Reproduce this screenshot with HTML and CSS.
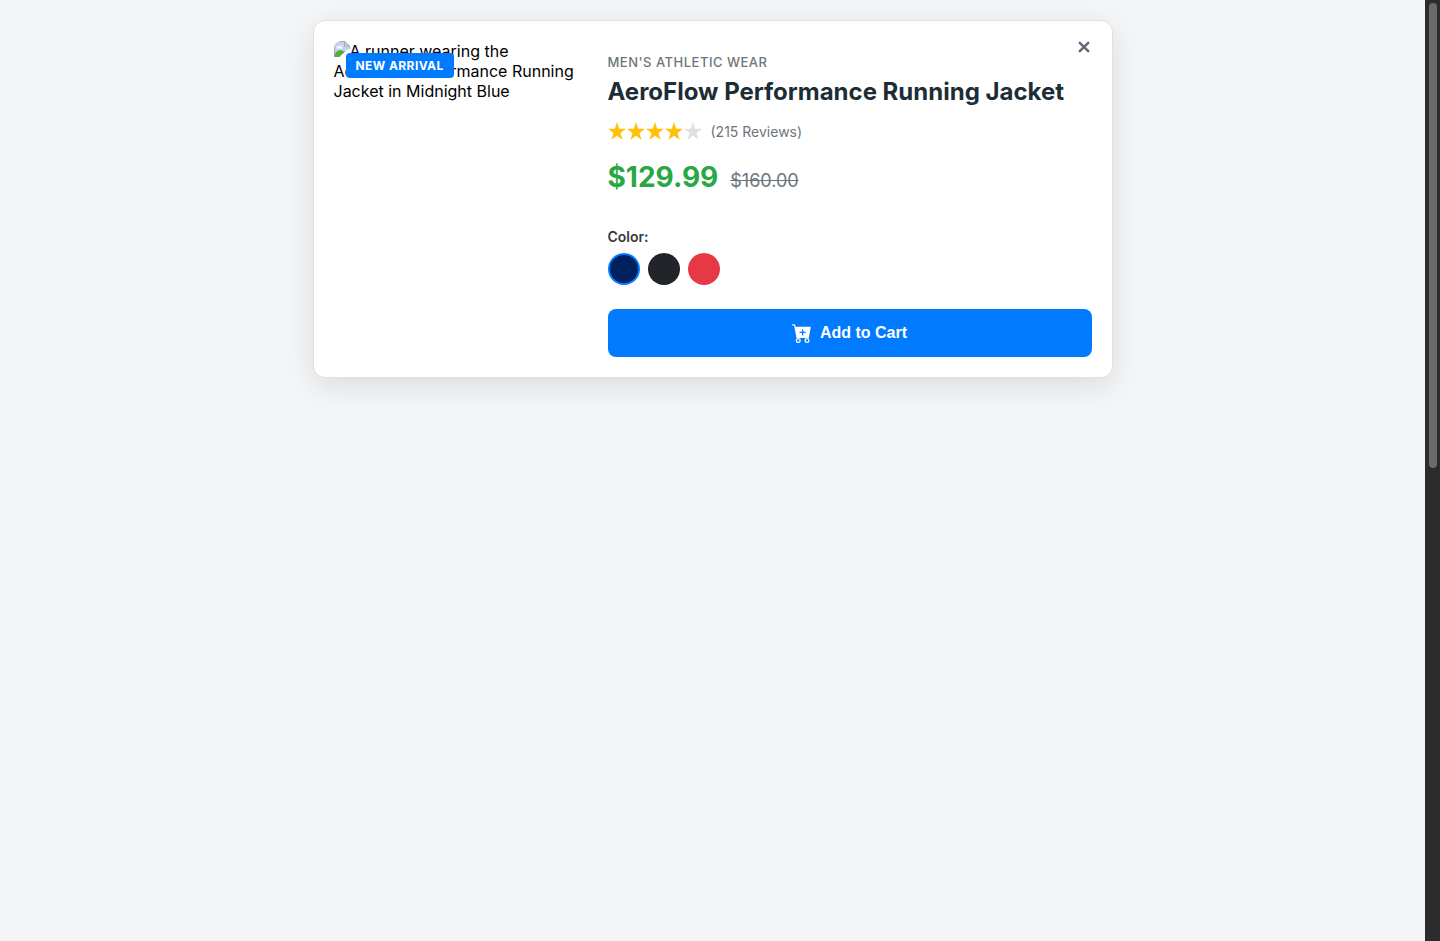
FILE: index.html
```html
<!DOCTYPE html>
<html lang="en">
<head>
<meta charset="utf-8">
<title>AeroFlow Performance Running Jacket</title>
<link rel="stylesheet" href="styles.css">
</head>
<body>
<main class="page">
  <article class="card">
    <div class="media">
      <p class="alt"><svg class="broken" width="16" height="16" viewBox="0 0 16 16"><path d="M0 16V6a6 6 0 0 1 6-6h5l5 5v3l-9 8z" fill="#c3d3f3"/><path d="M0 16v-2c3-5 6-6 11-3l-5 5z" fill="#55ad36"/><path d="M2.500 7.500c0-2 2-3 3-2 1-1 3 0 3 2z" fill="#fff"/><path d="M.5 16V6A5.500 5.500 0 0 1 6 .5h4.500L15.500 5v3M10.500.5V5h5" fill="none" stroke="#aaa"/><path d="M6 16l9.500-8" stroke="#fff" stroke-width="1.500"/></svg>A runner wearing the AeroFlow Performance Running Jacket in Midnight Blue</p>
      <span class="badge">New Arrival</span>
    </div>
    <div class="info">
      <button class="close" aria-label="Close"><svg width="12" height="12" viewBox="0 0 12 12"><path d="M1.800 1.800l8.400 8.400M10.200 1.800l-8.400 8.400" fill="none" stroke="currentColor" stroke-width="2.500" stroke-linecap="round"/></svg></button>
      <p class="category">Men's Athletic Wear</p>
      <h1 class="title">AeroFlow Performance Running Jacket</h1>
      <div class="rating">
        <svg class="stars" width="95" height="20" viewBox="0 0 95 20">
          <defs><path id="star" d="M9 0l2.150 6.700h6.850l-5.500 4.200 2.100 6.900L9 13.700l-5.600 4.100 2.100-6.900L0 6.700h6.850z"/></defs>
          <g fill="#ffc107"><use href="#star"/><use href="#star" x="19"/><use href="#star" x="38"/><use href="#star" x="57"/></g>
          <use href="#star" x="76" fill="#e0e0e0"/>
        </svg>
        <span class="reviews">(215 Reviews)</span>
      </div>
      <div class="prices"><span class="price">$129.99</span><s class="was">$160.00</s></div>
      <p class="label">Color:</p>
      <div class="swatches"><span class="swatch navy"></span><span class="swatch black"></span><span class="swatch red"></span></div>
      <button class="add"><svg width="20" height="20" viewBox="0 0 16 16" fill="currentColor"><path d="M.5 1a.5.5 0 0 0 0 1h1.110l.401 1.607 1.498 7.985A.5.5 0 0 0 4 12h1a2 2 0 1 0 0 4 2 2 0 0 0 0-4h7a2 2 0 1 0 0 4 2 2 0 0 0 0-4h1a.5.5 0 0 0 .491-.408l1.500-8A.5.5 0 0 0 14.500 3H2.890l-.405-1.621A.5.5 0 0 0 2 1H.5zM6 14a1 1 0 1 1-2 0 1 1 0 0 1 2 0zm7 0a1 1 0 1 1-2 0 1 1 0 0 1 2 0zM9 5.500V7h1.500a.5.5 0 0 1 0 1H9v1.500a.5.5 0 0 1-1 0V8H6.500a.5.5 0 0 1 0-1H8V5.500a.5.5 0 0 1 1 0z"/></svg>Add to Cart</button>
    </div>
  </article>
</main>
<div class="scrollbar"><div class="thumb"></div></div>
</body>
</html>
```
FILE: styles.css
```css
* { box-sizing: border-box; }
body {
  display: flex;
  height: 941px;
  margin: 0;
  overflow: hidden;
  background: #f3f5f7;
  font-family: Inter, sans-serif;
}
p, h1 { margin: 0; }
button { border: 0; padding: 0; }
.page {
  flex: 1;
  display: flex;
  justify-content: center;
  align-items: flex-start;
  padding-top: 20px;
}
.card {
  display: flex;
  gap: 24px;
  width: 800px;
  height: 358px;
  padding: 20px;
  border: 1px solid #e0e0e0;
  border-radius: 12px;
  background: #fff;
  box-shadow: 0 8px 30px rgba(0, 0, 0, .1);
}
.media { position: relative; width: 250px; }
.alt { font-size: 16px; line-height: 20px; color: #000; }
.broken { vertical-align: top; border-top-left-radius: 8px; }
.badge {
  position: absolute;
  left: 12px;
  top: 12px;
  height: 25px;
  padding: 0 10px;
  border-radius: 4px;
  background: #007bff;
  color: #fff;
  font-size: 12px;
  font-weight: 700;
  line-height: 25px;
  letter-spacing: .42px;
  text-transform: uppercase;
  white-space: nowrap;
}
.info { position: relative; flex: 1; padding-top: 13px; }
.close {
  position: absolute;
  top: 0;
  right: 1.5px;
  display: flex;
  background: none;
  color: #5f6b76;
}
.category {
  font-size: 13px;
  font-weight: 500;
  line-height: 16px;
  letter-spacing: .5px;
  text-transform: uppercase;
  color: #6c757d;
}
.title {
  margin-top: 7px;
  font-size: 24px;
  font-weight: 700;
  line-height: 30px;
  white-space: nowrap;
  color: #1d2d35;
}
.rating { display: flex; align-items: center; gap: 8px; height: 20px; margin-top: 15px; }
.reviews { font-size: 14px; line-height: 20px; color: #6c757d; }
.prices { display: flex; align-items: baseline; gap: 12px; height: 34px; margin-top: 18px; }
.price { font-size: 28px; font-weight: 700; line-height: 34px; color: #28a745; }
.was { font-size: 18px; line-height: 22px; color: #6c757d; }
.label { margin-top: 34px; font-size: 14px; font-weight: 600; line-height: 18px; color: #343a40; }
.swatches { display: flex; gap: 8px; margin-top: 7px; }
.swatch { width: 32px; height: 32px; border-radius: 50%; }
.navy { border: 2px solid #007bff; background: #002060; }
.black { background: #212529; }
.red { background: #e63946; }
.add {
  display: flex;
  align-items: center;
  justify-content: center;
  gap: 8px;
  width: 100%;
  height: 48px;
  margin-top: 24px;
  border-radius: 8px;
  background: #007bff;
  color: #fff;
  font: 700 16px "Liberation Sans", sans-serif;
}
.scrollbar { width: 15px; padding: 3px 3px 0 4px; background: #2c2c2c; }
.thumb { width: 8px; height: 465px; border-radius: 4px; background: #6b6b6b; }
```
